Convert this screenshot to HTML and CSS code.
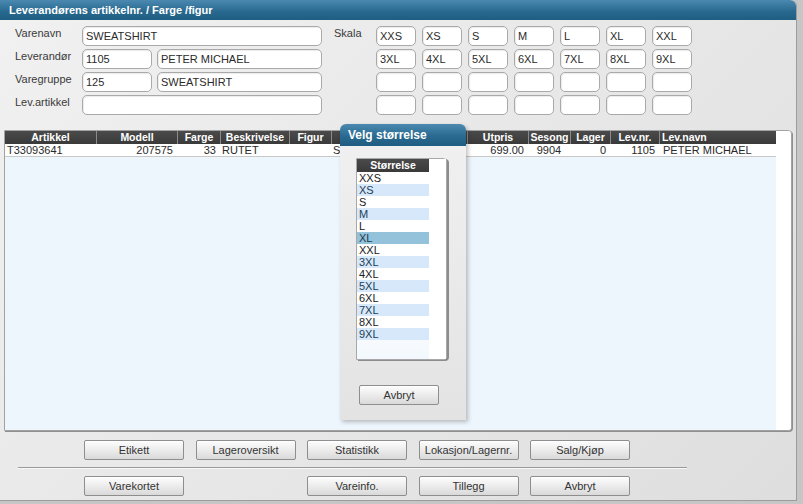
FILE: index.html
```html
<!DOCTYPE html>
<html lang="no">
<head>
<meta charset="utf-8">
<title>Leverandørens artikkelnr.</title>
<link rel="stylesheet" href="styles.css">
</head>
<body>
<div class="window">
  <div class="titlebar">Leverandørens artikkelnr. / Farge /figur</div>

  <div class="form">
    <div class="fields">
      <span class="lbl">Varenavn</span><div class="inp span2">SWEATSHIRT</div>
      <span class="lbl">Leverandør</span><div class="inp">1105</div><div class="inp">PETER MICHAEL</div>
      <span class="lbl">Varegruppe</span><div class="inp">125</div><div class="inp">SWEATSHIRT</div>
      <span class="lbl">Lev.artikkel</span><div class="inp span2"></div>
    </div>
    <span class="lbl skala">Skala</span>
    <div class="sizes">
      <div class="inp">XXS</div><div class="inp">XS</div><div class="inp">S</div><div class="inp">M</div><div class="inp">L</div><div class="inp">XL</div><div class="inp">XXL</div>
      <div class="inp">3XL</div><div class="inp">4XL</div><div class="inp">5XL</div><div class="inp">6XL</div><div class="inp">7XL</div><div class="inp">8XL</div><div class="inp">9XL</div>
      <div class="inp"></div><div class="inp"></div><div class="inp"></div><div class="inp"></div><div class="inp"></div><div class="inp"></div><div class="inp"></div>
      <div class="inp"></div><div class="inp"></div><div class="inp"></div><div class="inp"></div><div class="inp"></div><div class="inp"></div><div class="inp"></div>
    </div>
  </div>

  <div class="grid">
    <div class="table">
      <div class="row thead">
        <div>Artikkel</div><div>Modell</div><div>Farge</div><div>Beskrivelse</div><div>Figur</div><div></div><div>Utpris</div><div>Sesong</div><div>Lager</div><div>Lev.nr.</div><div class="left">Lev.navn</div>
      </div>
      <div class="row tdata">
        <div class="left">T33093641</div><div class="right">207575</div><div class="right">33</div><div class="left">RUTET</div><div></div><div class="left">S</div><div class="right">699.00</div><div class="center">9904</div><div class="right">0</div><div class="right">1105</div><div class="left">PETER MICHAEL</div>
      </div>
    </div>
    <div class="scrollcol"></div>
  </div>

  <div class="buttons">
    <button class="btn">Etikett</button>
    <button class="btn">Lageroversikt</button>
    <button class="btn">Statistikk</button>
    <button class="btn">Lokasjon/Lagernr.</button>
    <button class="btn">Salg/Kjøp</button>
  </div>
  <div class="sep"></div>
  <div class="buttons">
    <button class="btn">Varekortet</button>
    <button class="btn col3">Vareinfo.</button>
    <button class="btn">Tillegg</button>
    <button class="btn">Avbryt</button>
  </div>

  <div class="popup">
    <div class="popup-title">Velg størrelse</div>
    <div class="listbox">
      <div class="list">
        <div class="list-head">Størrelse</div>
        <div class="item">XXS</div>
        <div class="item alt">XS</div>
        <div class="item">S</div>
        <div class="item alt">M</div>
        <div class="item">L</div>
        <div class="item sel">XL</div>
        <div class="item">XXL</div>
        <div class="item alt">3XL</div>
        <div class="item">4XL</div>
        <div class="item alt">5XL</div>
        <div class="item">6XL</div>
        <div class="item alt">7XL</div>
        <div class="item">8XL</div>
        <div class="item alt">9XL</div>
      </div>
      <div class="list-scroll"></div>
    </div>
    <button class="btn popup-btn">Avbryt</button>
  </div>
</div>
</body>
</html>
```

FILE: styles.css
```css
* { box-sizing: border-box; }

html, body {
  margin: 0;
  padding: 0;
}

body {
  width: 803px;
  height: 504px;
  background: #c6c6c6;
  font-family: "Liberation Sans", Arial, sans-serif;
  font-size: 11px;
  color: #2a2a2a;
  overflow: hidden;
}

.window {
  position: relative;
  width: 797px;
  height: 501px;
  background: linear-gradient(135deg, #f1f1f1 0%, #e6e6e6 60%, #dedede 100%);
  border-right: 1px solid #9c9c9c;
  border-bottom: 1px solid #9c9c9c;
  border-radius: 0 6px 0 0;
}

.titlebar {
  height: 20px;
  line-height: 20px;
  padding-left: 9px;
  color: #fff;
  font-weight: bold;
  font-size: 11px;
  background: linear-gradient(#4b89b0, #2a6a90 55%, #1f5d82);
  border-radius: 0 6px 0 0;
}

/* ---------- form ---------- */
.form {
  display: flex;
  align-items: flex-start;
  margin-top: 6px;
  padding-left: 15px;
}

.fields {
  display: grid;
  grid-template-columns: 62px 70px 165px;
  grid-auto-rows: 20px;
  column-gap: 5px;
  row-gap: 3px;
}

.lbl {
  color: #3a3a3a;
  font-size: 11px;
  line-height: 14px;
  align-self: start;
}

.skala {
  width: 42px;
  margin-left: 12px;
}

.inp {
  height: 20px;
  line-height: 18px;
  padding-left: 3px;
  background: #fff;
  border: 1px solid #a9a9a9;
  border-radius: 5px;
  box-shadow: inset 1px 1px 1px rgba(0,0,0,0.08);
  font-size: 11px;
  color: #2a2a2a;
  white-space: nowrap;
  overflow: hidden;
}

.span2 { grid-column: 2 / span 2; }

.sizes {
  display: grid;
  grid-template-columns: repeat(7, 40px);
  grid-auto-rows: 20px;
  column-gap: 6px;
  row-gap: 3px;
}

/* ---------- grid ---------- */
.grid {
  display: flex;
  margin: 15px 0 0 4px;
  width: 788px;
  height: 301px;
  border: 1px solid #a2a2a2;
  border-radius: 0 4px 4px 0;
  box-shadow: 1px 1px 0 #8f8f8f;
  background: #fff;
  overflow: hidden;
}

.table {
  width: 771px;
  background: #eef6fd;
}

.scrollcol {
  flex: 1;
  background: #fff;
}

.row {
  display: grid;
  grid-template-columns: 91px 81px 43px 69px 42px 136px 61px 42px 40px 49px 117px;
}

.thead {
  height: 13px;
  background: linear-gradient(#4a4a4a, #3a3a3a);
  color: #fff;
  font-weight: bold;
  font-size: 10.5px;
  line-height: 13px;
}

.thead > div {
  text-align: center;
  border-left: 1px solid #8a8a8a;
  white-space: nowrap;
  overflow: hidden;
}

.thead > div:first-child { border-left: none; }
.thead > div.left { text-align: left; padding-left: 2px; }

.tdata {
  height: 13px;
  background: #fff;
  border-bottom: 1px solid #c8c8c8;
  line-height: 12px;
  font-size: 11px;
}

.tdata > div {
  white-space: nowrap;
  overflow: hidden;
}

.left { text-align: left; padding-left: 2px; }
.right { text-align: right; padding-right: 4px; }
.center { text-align: center; }
.tdata > div.left:last-child { padding-left: 4px; }

/* ---------- buttons ---------- */
.buttons {
  display: grid;
  grid-template-columns: repeat(5, 100px);
  column-gap: 11.5px;
  padding-left: 84px;
  margin-top: 9px;
}

.btn {
  height: 20px;
  padding: 0;
  font-family: "Liberation Sans", Arial, sans-serif;
  font-size: 11px;
  color: #333;
  background: linear-gradient(#fdfdfd, #ececec 50%, #d9d9d9);
  border: 1px solid #8e8e8e;
  border-radius: 2px;
  box-shadow: inset 0 1px 0 #fff;
}

.col3 { grid-column: 3; }

.sep {
  margin: 7px 0 0 18px;
  width: 669px;
  height: 2px;
  border-top: 1px solid #9a9a9a;
  border-bottom: 1px solid #f7f7f7;
}

.sep + .buttons { margin-top: 7px; }

/* ---------- popup ---------- */
.popup {
  position: absolute;
  left: 340px;
  top: 124px;
  width: 126px;
  height: 296px;
  background: linear-gradient(#f1f1f1, #e3e3e3);
  border-radius: 6px 6px 0 0;
  box-shadow: 2px 2px 4px rgba(0,0,0,0.25);
}

.popup-title {
  height: 22px;
  line-height: 22px;
  padding-left: 8px;
  color: #fff;
  font-weight: bold;
  font-size: 12px;
  background: linear-gradient(#4b89b0, #2a6a90 55%, #1f5d82);
  border-radius: 6px 6px 0 0;
}

.listbox {
  display: flex;
  margin: 12px 0 0 16px;
  width: 91px;
  height: 202px;
  background: #fff;
  border: 1px solid #a8a8a8;
  border-radius: 0 4px 4px 0;
  box-shadow: 2px 1px 0 #8c8c8c;
}

.list {
  width: 72px;
  background: linear-gradient(#fff 75%, #f2f8fd);
}

.list-scroll { flex: 1; background: #fff; }

.list-head {
  height: 13px;
  line-height: 13px;
  text-align: center;
  background: linear-gradient(#4a4a4a, #3a3a3a);
  color: #fff;
  font-weight: bold;
  font-size: 10.5px;
}

.item {
  height: 12px;
  line-height: 12px;
  padding-left: 2px;
  font-size: 11px;
  color: #222;
  background: #fff;
}

.item.alt { background: #d6e8f9; color: #23405a; }
.item.sel { background: #93c2da; color: #1d3a4e; }

.popup-btn {
  display: block;
  width: 80px;
  margin: 25px 0 0 19px;
}
```
